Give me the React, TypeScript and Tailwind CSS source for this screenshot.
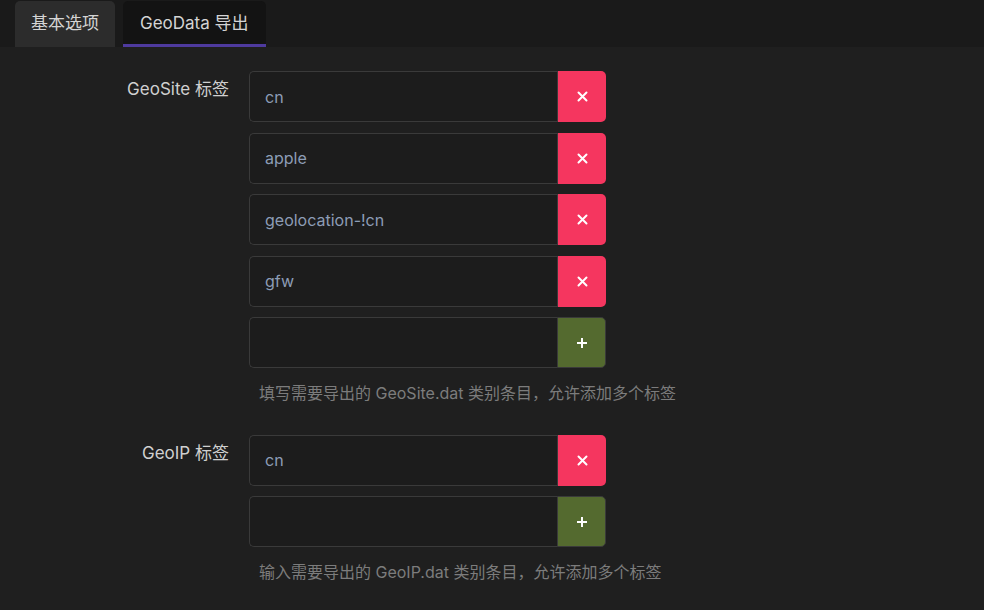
import React from "react";

const font = { fontFamily: 'Inter, "Noto Sans CJK SC", sans-serif' };

function TagRow({ value, add }: { value?: string; add?: boolean }) {
  return (
    <div className="flex h-[51px] w-[357px]">
      <div className="flex flex-1 items-center rounded-l-[5px] border border-r-0 border-[#3a3a3a] bg-[#1c1c1c] pl-[15px] text-[16px] text-[#8d9db6]">
        {value}
      </div>
      {add ? (
        <div className="flex w-[49px] items-center justify-center rounded-r-[5px] border border-[#3a3a3a] bg-[#546a2f]">
          <svg width="12" height="12" viewBox="0 0 12 12">
            <path d="M6 1V11M1 6H11" stroke="white" strokeWidth="2" />
          </svg>
        </div>
      ) : (
        <div className="flex w-[49px] items-center justify-center rounded-r-[5px] border-l border-[#3a3a3a] bg-[#f5365f]">
          <svg width="11" height="11" viewBox="0 0 11 11">
            <path d="M1.5 1.5L9.5 9.5M9.5 1.5L1.5 9.5" stroke="white" strokeWidth="2" strokeLinecap="round" />
          </svg>
        </div>
      )}
    </div>
  );
}

function Section({ label, values, help }: { label: string; values: string[]; help: string }) {
  return (
    <div className="flex gap-[20px]">
      <div className="w-[229px] shrink-0 pt-[6px] text-right text-[17px] text-[#d0d0d0]">{label}</div>
      <div className="flex flex-col gap-[10.5px]">
        {values.map((v) => (
          <TagRow key={v} value={v} />
        ))}
        <TagRow add />
        <div className="mt-[2px] pl-[10px] text-[16px] text-[#7c7c7c]">{help}</div>
      </div>
    </div>
  );
}

export default function App() {
  return (
    <div className="min-h-[610px] w-[984px] bg-[#1f1f1f]" style={font}>
      <div className="flex h-[47px] items-end gap-[8px] bg-[#1a1a1a] px-[15px]">
        <div className="flex h-[46px] items-center rounded-t-[5px] bg-[#2c2c2c] px-[16px] text-[17px] text-[#d4d4d4]">
          基本选项
        </div>
        <div className="flex h-[46px] items-center rounded-t-[5px] border-b-[3px] border-[#4e3a9e] bg-[#131313] px-[17px] pt-[3px] text-[17px] text-[#d4d4d4]">
          GeoData 导出
        </div>
      </div>
      <div className="flex flex-col gap-[30px] pt-[24px]">
        <Section
          label="GeoSite 标签"
          values={["cn", "apple", "geolocation-!cn", "gfw"]}
          help="填写需要导出的 GeoSite.dat 类别条目，允许添加多个标签"
        />
        <Section label="GeoIP 标签" values={["cn"]} help="输入需要导出的 GeoIP.dat 类别条目，允许添加多个标签" />
      </div>
    </div>
  );
}
